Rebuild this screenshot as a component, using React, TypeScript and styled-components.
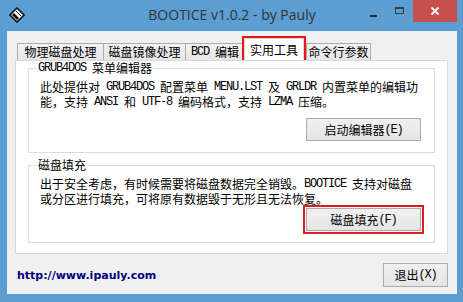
import React from 'react'
import styled, { createGlobalStyle } from 'styled-components'

const GlobalStyle = createGlobalStyle`
	html,
	body {
		margin: 0;
		padding: 0;
	}
	body {
		font-family: 'Noto Sans CJK SC', sans-serif;
		font-size: 12px;
		color: #000;
	}
`

// SimSun draws ASCII at half width (6px), so latin runs get their own face
const Ascii = styled.span`
	font-family: 'Liberation Mono', monospace;
	font-size: 12px;
	letter-spacing: -1.2px;
	line-height: 1px;
	vertical-align: 2px;
`

function Mixed({ text }: { text: string }) {
	const parts = text.split(/([\x20-\x7e]+)/)
	return (
		<span>
			{parts.map((p, i) =>
				/^[\x20-\x7e]+$/.test(p) ? <Ascii key={i}>{p}</Ascii> : p
			)}
		</span>
	)
}

const tabs = [
	{ label: '物理磁盘处理', w: 87 },
	{ label: '磁盘镜像处理', w: 83 },
	{ label: 'BCD 编辑', w: 60 },
	{ label: '实用工具', w: 60, selected: true },
	{ label: '命令行参数', w: 65 },
]

const grubText = [
	'此处提供对 GRUB4DOS 配置菜单 MENU.LST 及 GRLDR 内置菜单的编辑功',
	'能，支持 ANSI 和 UTF-8 编码格式，支持 LZMA 压缩。',
]

const fillText = [
	'出于安全考虑，有时候需要将磁盘数据完全销毁。BOOTICE 支持对磁盘',
	'或分区进行填充，可将原有数据毁于无形且无法恢复。',
]

export default function App() {
	return (
		<>
			<GlobalStyle />
			<Window>
				<TitleBar>
					<AppIcon width="16" height="16" viewBox="0 0 16 16">
						<polygon
							points="8,1 15,8 8,15 1,8"
							fill="#fff"
							stroke="#111"
							strokeWidth="1.6"
						/>
						<polygon points="5,6 10,11 8,13 3,8" fill="#111" />
						<line x1="7" y1="4" x2="12" y2="9" stroke="#111" strokeWidth="1" />
					</AppIcon>
					<Title>BOOTICE v1.0.2 - by Pauly</Title>
					<Controls>
						<CtrlButton $w={26}>
							<MinGlyph />
						</CtrlButton>
						<CtrlButton $w={27}>
							<MaxGlyph />
						</CtrlButton>
						<CtrlButton $w={44} $danger>
							<svg width="10" height="10" viewBox="0 0 10 10">
								<path
									d="M1.5 1.5 L8.5 8.5 M8.5 1.5 L1.5 8.5"
									stroke="#fff"
									strokeWidth="1.8"
								/>
							</svg>
						</CtrlButton>
					</Controls>
				</TitleBar>

				<Client>
					<TabRow>
						{tabs.map((t) => (
							<Tab key={t.label} $w={t.w} $selected={!!t.selected}>
								<Mixed text={t.label} />
							</Tab>
						))}
					</TabRow>

					<Panel>
						<Group>
							<Legend>
								<Mixed text="GRUB4DOS 菜单编辑器" />
							</Legend>
							{grubText.map((l) => (
								<Line key={l}>
									<Mixed text={l} />
								</Line>
							))}
							<ButtonRow $gap={9}>
								<Button $w={115}>
									<Mixed text="启动编辑器(E)" />
								</Button>
							</ButtonRow>
						</Group>

						<Group $spaced>
							<Legend>磁盘填充</Legend>
							{fillText.map((l) => (
								<Line key={l}>
									<Mixed text={l} />
								</Line>
							))}
							<ButtonRow $gap={2}>
								<Button $w={115} $marked>
									<Mixed text="磁盘填充(F)" />
								</Button>
							</ButtonRow>
						</Group>
					</Panel>

					<Footer>
						<Link>http://www.ipauly.com</Link>
						<Button $w={65} $h={24}>
							<Mixed text="退出(X)" />
						</Button>
					</Footer>
				</Client>
			</Window>
		</>
	)
}

const Window = styled.div`
	width: 463px;
	height: 302px;
	box-sizing: border-box;
	background: #5c9ed2;
	padding: 0 6px 8px 7px;
	display: flex;
	flex-direction: column;
`

const TitleBar = styled.div`
	height: 31px;
	flex: none;
	display: grid;
	grid-template-columns: 1fr auto 1fr;
	align-items: start;
`

const AppIcon = styled.svg`
	margin: 7px 0 0 2px;
`

const Title = styled.div`
	font-family: 'Open Sans', 'Noto Sans', sans-serif;
	font-size: 14px;
	line-height: 30px;
	color: #333;
	white-space: nowrap;
`

const Controls = styled.div`
	justify-self: end;
	display: flex;
	align-items: flex-start;
`

const CtrlButton = styled.div<{ $w: number; $danger?: boolean }>`
	width: ${(p) => p.$w}px;
	height: 22px;
	display: flex;
	align-items: center;
	justify-content: center;
	background: ${(p) => (p.$danger ? '#c7504f' : 'transparent')};
`

const MinGlyph = styled.div`
	width: 7px;
	height: 2px;
	margin-top: 10px;
	background: #2a2a2a;
`

const MaxGlyph = styled.div`
	width: 9px;
	height: 7px;
	margin-top: -2px;
	box-sizing: border-box;
	border: 1px solid #3a3a3a;
	border-top-width: 2px;
`

const Client = styled.div`
	flex: 1;
	background: #f0f0f0;
	display: flex;
	flex-direction: column;
	padding: 7px 9px 7px 8px;
`

const TabRow = styled.div`
	height: 22px;
	display: flex;
	align-items: flex-end;
	padding-left: 2px;
`

const Tab = styled.div<{ $w: number; $selected: boolean }>`
	width: ${(p) => p.$w}px;
	height: ${(p) => (p.$selected ? 22 : 17)}px;
	box-sizing: border-box;
	border: 1px solid ${(p) => (p.$selected ? '#d9d9d9' : '#acacac')};
	border-bottom: none;
	background: ${(p) =>
		p.$selected ? '#fff' : 'linear-gradient(#f2f2f2, #e6e6e6)'};
	display: flex;
	align-items: center;
	justify-content: center;
	line-height: 12px;
	white-space: pre;
	margin: ${(p) => (p.$selected ? '0 3px 0 1px' : '0')};
	outline: ${(p) => (p.$selected ? '2px solid #e3191e' : 'none')};
	& + & {
		margin-left: ${(p) => (p.$selected ? 1 : -1)}px;
	}
`

const Panel = styled.div`
	height: 194px;
	flex: none;
	box-sizing: border-box;
	background: #fff;
	border: 1px solid #d9d9d9;
	padding: 1px 12px 0 12px;
	display: flex;
	flex-direction: column;
`

const Group = styled.fieldset<{ $spaced?: boolean }>`
	margin: ${(p) => (p.$spaced ? '6px' : '0')} 0 0 0;
	padding: 5px 13px 11px 11px;
	border: 1px solid #dcdcdc;
	min-width: 0;
`

const Legend = styled.legend`
	padding: 0 2px;
	margin-left: -4px;
	height: 12px;
	line-height: 12px;
	white-space: pre;
`

const Line = styled.div`
	height: 15px;
	line-height: 15px;
	white-space: pre;
`

const ButtonRow = styled.div<{ $gap: number }>`
	display: flex;
	justify-content: flex-end;
	margin-top: ${(p) => p.$gap}px;
`

const Button = styled.button<{ $w: number; $h?: number; $marked?: boolean }>`
	width: ${(p) => p.$w}px;
	height: ${(p) => p.$h ?? 23}px;
	box-sizing: border-box;
	padding: 0;
	border: 1px solid #acacac;
	background: linear-gradient(#f0f0f0, #e5e5e5);
	font-family: 'Noto Sans CJK SC', sans-serif;
	font-size: 12px;
	line-height: 12px;
	white-space: pre;
	color: #000;
	outline: ${(p) => (p.$marked ? '2px solid #e3191e' : 'none')};
	outline-offset: 1px;
`

const Footer = styled.div`
	margin-top: 9px;
	display: flex;
	justify-content: space-between;
	align-items: center;
	padding-left: 2px;
`

const Link = styled.span`
	font-family: 'DejaVu Sans', sans-serif;
	font-weight: bold;
	font-size: 11px;
	color: #000080;
`
